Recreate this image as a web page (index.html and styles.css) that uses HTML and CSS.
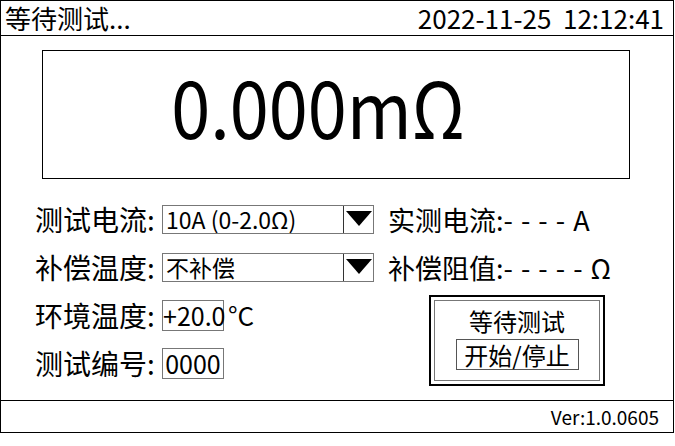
FILE: index.html
```html
<!DOCTYPE html>
<html lang="zh-CN">
<head>
<meta charset="utf-8">
<title>等待测试</title>
<link rel="stylesheet" href="styles.css">
</head>
<body>
<div class="frame">
  <header class="topbar">
    <span class="status">等待测试...</span>
    <span class="clock">2022-11-25  12:12:41</span>
  </header>
  <main class="main">
    <div class="reading"><span class="reading-value">0.000mΩ</span></div>
    <div class="controls">
      <div class="fields">
        <div class="row">
          <span class="label">测试电流:</span>
          <div class="select">
            <span class="select-text">10A (0-2.0Ω)</span>
            <span class="select-arrow"><svg width="26" height="15" viewBox="0 0 26 15"><polygon points="0,0 26,0 13,15" fill="#000"/></svg></span>
          </div>
        </div>
        <div class="row">
          <span class="label">补偿温度:</span>
          <div class="select">
            <span class="select-text">不补偿</span>
            <span class="select-arrow"><svg width="26" height="15" viewBox="0 0 26 15"><polygon points="0,0 26,0 13,15" fill="#000"/></svg></span>
          </div>
        </div>
        <div class="row">
          <span class="label">环境温度:</span>
          <span class="input">+20.0</span>
          <span class="unit">°C</span>
        </div>
        <div class="row">
          <span class="label">测试编号:</span>
          <span class="input">0000</span>
        </div>
      </div>
      <div class="side">
        <div class="row readout">实测电流:<span class="dashes">- - - - A</span></div>
        <div class="row readout">补偿阻值:<span class="dashes">- - - - - Ω</span></div>
        <div class="panel">
          <div class="panel-inner">
            <div class="panel-title">等待测试</div>
            <div class="panel-btn">开始/停止</div>
          </div>
        </div>
      </div>
    </div>
  </main>
  <footer class="footer">Ver:1.0.0605</footer>
</div>
</body>
</html>
```
FILE: styles.css
```css
html, body {
  margin: 0;
  padding: 0;
  background: #fff;
}
body {
  font-family: "Noto Sans CJK SC", "Noto Sans", sans-serif;
  color: #000;
}
.frame {
  width: 674px;
  height: 433px;
  box-sizing: border-box;
  border: 1px solid #000;
  display: flex;
  flex-direction: column;
}
.topbar {
  height: 34px;
  border-bottom: 1px solid #000;
  display: flex;
  align-items: center;
  justify-content: space-between;
  padding: 0 9px 0 4px;
}
.status {
  font-size: 26px;
  line-height: 34px;
}
.clock {
  font-size: 26px;
  line-height: 34px;
  white-space: pre;
}
.main {
  flex: 1;
  padding: 14px 0 0 0;
}
.reading {
  margin-left: 41px;
  width: 588px;
  height: 129px;
  box-sizing: border-box;
  border: 1px solid #000;
  display: flex;
  align-items: center;
  justify-content: center;
  padding: 0 36px 20px 0;
}
.reading-value {
  display: inline-block;
  font-size: 78px;
  line-height: 1;
  transform: scaleX(0.9);
}
.controls {
  display: flex;
  margin-top: 16px;
  padding-left: 34px;
}
.fields {
  width: 339px;
}
.row {
  height: 48px;
  display: flex;
  align-items: center;
}
.label {
  width: 127px;
  font-size: 28px;
  line-height: 1;
  white-space: nowrap;
}
.select {
  width: 212px;
  height: 29px;
  box-sizing: border-box;
  border: 1px solid #777;
  display: flex;
}
.select-text {
  flex: 1;
  font-size: 23px;
  line-height: 27px;
  padding-left: 3px;
  white-space: nowrap;
}
.select-arrow {
  width: 30px;
  border-left: 1px solid #333;
  display: flex;
  justify-content: center;
  padding-top: 5px;
  box-sizing: border-box;
}
.input {
  height: 31px;
  width: 62px;
  box-sizing: border-box;
  border: 1px solid #777;
  font-size: 25px;
  line-height: 29px;
  text-align: center;
}
.unit {
  font-size: 26px;
  line-height: 1;
  margin-left: 4px;
}
.side {
  margin-left: 14px;
}
.readout {
  font-size: 27px;
  line-height: 1;
  white-space: pre;
}
.dashes {
  letter-spacing: 1px;
}
.panel {
  margin: 4px 0 0 41px;
  width: 176px;
  height: 91px;
  box-sizing: border-box;
  border: 2px solid #000;
  padding: 3px;
}
.panel-inner {
  height: 100%;
  box-sizing: border-box;
  border: 1px solid #777;
  display: flex;
  flex-direction: column;
  align-items: center;
}
.panel-title {
  font-size: 24px;
  line-height: 34px;
  margin-top: 3px;
}
.panel-btn {
  width: 123px;
  height: 31px;
  box-sizing: border-box;
  border: 1px solid #555;
  font-size: 24px;
  line-height: 29px;
  text-align: center;
  margin-top: 1px;
}
.footer {
  height: 31px;
  border-top: 1px solid #000;
  display: flex;
  align-items: center;
  justify-content: flex-end;
  padding-right: 14px;
  font-size: 19px;
  line-height: 31px;
}
```
